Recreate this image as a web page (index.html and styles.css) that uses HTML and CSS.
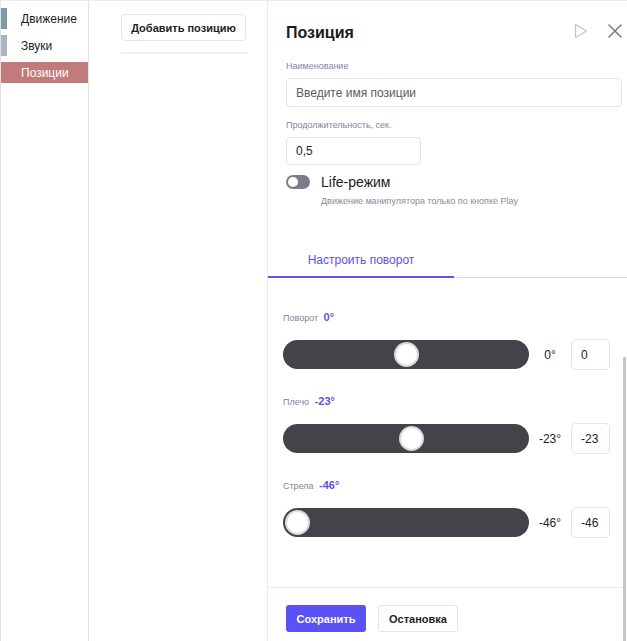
FILE: index.html
```html
<!DOCTYPE html>
<html lang="ru">
<head>
<meta charset="utf-8">
<title>Позиция</title>
<link rel="stylesheet" href="styles.css">
</head>
<body>
<div class="app">
  <nav class="sidebar">
    <div class="nav-item"><span class="nav-mark mark-move"></span><span class="nav-text">Движение</span></div>
    <div class="nav-item"><span class="nav-mark mark-sound"></span><span class="nav-text">Звуки</span></div>
    <div class="nav-item active"><span class="nav-mark"></span><span class="nav-text">Позиции</span></div>
  </nav>
  <section class="list">
    <button class="add-btn">Добавить позицию</button>
    <div class="list-sep"></div>
  </section>
  <section class="panel">
    <div class="panel-main">
      <div class="form">
        <div class="header">
          <h1 class="title">Позиция</h1>
          <div class="header-icons">
            <svg class="icon-play" width="14" height="16" viewBox="0 0 14 16"><path d="M1.5 1.5 L12.5 8 L1.5 14.5 Z" fill="none" stroke="#c2c2d0" stroke-width="1.3" stroke-linejoin="round"/></svg>
            <svg class="icon-close" width="14" height="14" viewBox="0 0 14 14"><path d="M1 1 L13 13 M13 1 L1 13" stroke="#7b7d8c" stroke-width="1.6" stroke-linecap="round"/></svg>
          </div>
        </div>
        <label class="field-label lbl-name">Наименование</label>
        <div class="input input-wide placeholder">Введите имя позиции</div>
        <label class="field-label lbl-dur">Продолжительность, сек.</label>
        <div class="input input-short">0,5</div>
        <div class="toggle-row">
          <span class="toggle"><span class="toggle-knob"></span></span>
          <span class="toggle-text">Life-режим</span>
        </div>
        <div class="toggle-hint">Движение манипулятора только по кнопке Play</div>
      </div>
      <div class="tabs">
        <div class="tab active">Настроить поворот</div>
      </div>
      <div class="sliders">
        <div class="slider-block">
          <div class="slider-label">Поворот <span class="slider-val">0°</span></div>
          <div class="slider-row">
            <div class="track"><span class="knob" style="left:111px"></span></div>
            <span class="deg">0°</span>
            <div class="num-input">0</div>
          </div>
        </div>
        <div class="slider-block">
          <div class="slider-label">Плечо <span class="slider-val">-23°</span></div>
          <div class="slider-row">
            <div class="track"><span class="knob" style="left:116px"></span></div>
            <span class="deg">-23°</span>
            <div class="num-input">-23</div>
          </div>
        </div>
        <div class="slider-block">
          <div class="slider-label">Стрела <span class="slider-val">-46°</span></div>
          <div class="slider-row">
            <div class="track"><span class="knob" style="left:2px"></span></div>
            <span class="deg">-46°</span>
            <div class="num-input">-46</div>
          </div>
        </div>
      </div>
      <div class="footer">
        <button class="btn btn-primary">Сохранить</button>
        <button class="btn btn-secondary">Остановка</button>
      </div>
    </div>
    <div class="scroll-track"><div class="scroll-thumb"></div></div>
  </section>
</div>
</body>
</html>
```

FILE: styles.css
```css
* { box-sizing: border-box; }
html, body { margin: 0; padding: 0; background: #fff; }
body {
  font-family: "Liberation Sans", Arial, sans-serif;
  color: #1d1d22;
  width: 627px;
  height: 641px;
  overflow: hidden;
}
.app {
  display: flex;
  height: 641px;
  border-top: 1px solid #ececec;
}
.sidebar {
  width: 89px;
  border-left: 1px solid #e2e2e2;
  border-right: 1px solid #e2e2e2;
  padding-top: 7px;
  display: flex;
  flex-direction: column;
  gap: 6px;
}
.nav-item {
  height: 21px;
  display: flex;
  align-items: center;
  font-size: 12px;
  color: #1d1d22;
}
.nav-mark {
  width: 6px;
  height: 21px;
  margin-right: 14px;
}
.mark-move { background: #7f9aa7; }
.mark-sound { background: #a9b4c5; }
.nav-item.active { background: #c07b7a; color: #fff; }
.list {
  width: 179px;
  padding: 13px 0 0 32px;
  border-right: 1px solid #ececec;
}
.add-btn {
  display: block;
  width: 125px;
  height: 27px;
  border: 1px solid #e6e6e6;
  border-radius: 4px;
  background: #fff;
  font-family: inherit;
  font-size: 11px;
  font-weight: bold;
  color: #1d1d22;
  padding: 0;
}
.list-sep {
  width: 127px;
  height: 2px;
  background: #efeff1;
  margin-top: 11px;
}
.panel {
  flex: 1;
  display: flex;
}
.panel-main {
  width: 355px;
  display: flex;
  flex-direction: column;
}
.form { padding: 22px 0 0 18px; }
.header {
  display: flex;
  align-items: center;
  justify-content: space-between;
  height: 20px;
  padding-right: 1px;
}
.title {
  margin: 0;
  font-size: 16px;
  font-weight: bold;
  color: #1a1a1e;
}
.header-icons { display: flex; align-items: center; gap: 20px; margin-top: -4px; }
.field-label {
  display: block;
  font-size: 9px;
  line-height: 11px;
  color: #85859a;
}
.lbl-name { margin-top: 18px; }
.lbl-dur { margin-top: 13px; }
.input {
  margin-top: 6px;
  border: 1px solid #e3e3e8;
  border-radius: 4px;
  font-size: 12px;
  display: flex;
  align-items: center;
  padding-left: 9px;
  color: #1d1d22;
}
.input-wide { width: 336px; height: 29px; }
.input-short { width: 135px; height: 28px; }
.placeholder { color: #5a5a60; }
.toggle-row {
  display: flex;
  align-items: center;
  margin-top: 9px;
  height: 16px;
}
.toggle {
  width: 24px;
  height: 14px;
  border-radius: 7px;
  background: #7b7c8b;
  display: flex;
  align-items: center;
  padding-left: 2px;
}
.toggle-knob {
  width: 10px;
  height: 10px;
  border-radius: 50%;
  background: #fff;
}
.toggle-text {
  font-size: 14px;
  margin-left: 11px;
  color: #1d1d22;
}
.toggle-hint {
  font-size: 9px;
  line-height: 11px;
  color: #8a8a9c;
  margin: 6px 0 0 35px;
}
.tabs {
  margin-top: 35px;
  border-bottom: 1px solid #dcdce4;
  display: flex;
  width: 359px;
}
.tab {
  width: 186px;
  text-align: center;
  font-size: 12px;
  line-height: 14px;
  padding: 11px 0 9px;
  color: #5a50f0;
  border-bottom: 2px solid #5a52f2;
  margin-bottom: -1px;
}
.sliders { padding: 34px 0 0 15px; }
.slider-block { margin-bottom: 26px; }
.slider-label {
  font-size: 9px;
  line-height: 11px;
  color: #85859a;
}
.slider-val {
  font-size: 11px;
  font-weight: bold;
  color: #5a52f2;
  margin-left: 3px;
}
.slider-row {
  display: flex;
  align-items: center;
  margin-top: 15px;
  height: 31px;
}
.track {
  position: relative;
  width: 246px;
  height: 29px;
  border-radius: 15px;
  background: #444349;
}
.knob {
  position: absolute;
  top: 2px;
  width: 25px;
  height: 25px;
  border-radius: 50%;
  background: #fff;
  border: 2px solid #d9d9de;
}
.deg {
  width: 42px;
  text-align: center;
  font-size: 12px;
  color: #1d1d22;
}
.num-input {
  width: 39px;
  height: 31px;
  border: 1px solid #e3e3e8;
  border-radius: 5px;
  font-size: 12px;
  display: flex;
  align-items: center;
  padding-left: 9px;
  color: #1d1d22;
}
.footer {
  margin-top: auto;
  border-top: 1px solid #ececef;
  padding: 17px 0 9px 18px;
  display: flex;
  gap: 12px;
}
.btn {
  width: 80px;
  height: 27px;
  border-radius: 3px;
  font-family: inherit;
  font-size: 11px;
  font-weight: bold;
  padding: 0;
}
.btn-primary { background: #5b52f5; color: #fff; border: none; }
.btn-secondary { background: #fff; color: #1d1d22; border: 1px solid #e3e3e8; }
.scroll-track {
  width: 4px;
  padding-top: 356px;
}
.scroll-thumb {
  width: 3px;
  height: 290px;
  background: #c6c6c9;
}
```
